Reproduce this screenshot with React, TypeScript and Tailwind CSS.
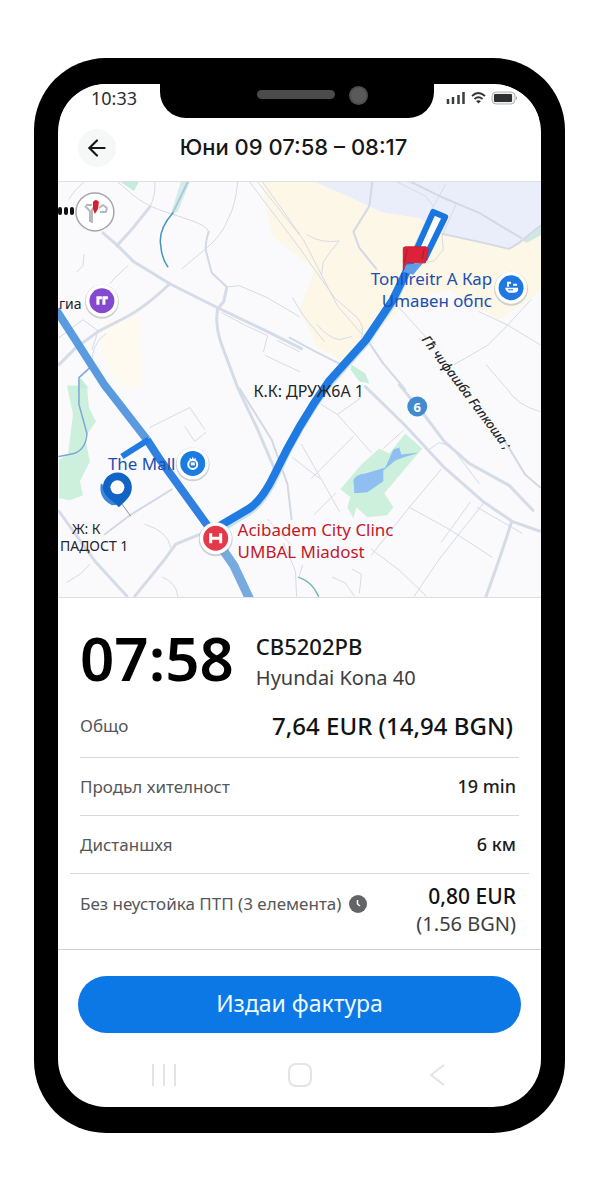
import { ArrowLeft } from 'lucide-react'
import type { ReactNode } from 'react'

const minorRoads = [
  'M155 182 Q156 196 150 207',
  'M118 182 L133 195 Q144 204 160 210 L190 220 Q208 226 209 232',
  'M238 182 Q236 205 229 218 Q222 236 206 249 L182 269',
  'M128 266 L115 278 L110 284',
  'M59 338 L83 320 L98 331',
  'M227 287 L240 286 L268 298 L300 317',
  'M222 313 Q245 326 268 336 L264 352',
  'M278 341 L300 352 M266 356 L300 372',
  'M250 182 L300 248 L335 298 L358 318 Q366 328 362 338',
  'M258 182 L304 240 L338 306 L362 334',
  'M263 182 L300 234',
  'M293 298 L304 316 L325 342 M318 325 Q328 338 340 340 L352 337',
  'M308 235 Q322 244 340 241 Q330 252 324 262 L322 275',
  'M457 204 L443 236 L444 250 L435 261 L424 263',
  'M446 185 L430 214 L415 246',
  'M398 182 L426 196 L434 206',
  'M400 308 L427 338',
  'M532 300 L508 326 L488 346 L455 365',
  'M480 312 L508 325 L541 345',
  'M487 365 L506 387 M507 388 Q518 406 541 412',
  'M338 415 L372 453 M354 437 L312 479 M322 405 L338 415 L362 398',
  'M302 445 L340 512 M293 458 L320 479 M315 515 L336 494',
  'M384 449 L404 431 M430 450 L440 443 L452 447 L480 484',
  'M442 470 L410 508 L372 556 M410 508 L450 530 L493 558',
  'M485 503 L440 560 L415 597 M372 550 L400 571 L427 597',
  'M478 508 L523 534 M471 503 L455 525 L442 543',
  'M333 578 L346 584 L355 597 M353 570 L362 575 L360 594 M303 566 L300 576',
  'M150 428 L190 408 L205 430 M185 427 L195 442 L206 433',
  'M90 565 L80 575 L67 583 M163 578 Q177 584 178 597',
  'M145 525 Q168 532 171 548',
  'M98 332 L92 350 M106 334 Q90 345 92 368',
  'M84 182 Q74 190 69 199 M84 255 L83 266 L77 272',
  'M284 544 L296 572 L297 597 M268 520 L290 544',
]

const mediumRoads = [
  'M209 232 Q206 240 206 250 L212 273 L227 287',
  'M373 182 L370 206 L354 232 L360 248 L377 269',
  'M412 182 L440 196 L480 213 L522 238',
  'M443 234 L480 242 L510 249 L520 243 L541 226',
  'M105 535 L130 516 L172 490',
  'M290 338 L316 352 L340 364',
  'M240 389 L272 440 L288 485 L292 520',
  'M365 336 L384 364 L406 390',
  'M506 442 L526 475 L541 488',
]

const majorRoads = [
  'M103 233 L118 246 L134 262 L170 284 L220 309 L270 333 L302 349',
  'M150 207 L134 227 L117 246',
  'M227 288 L224 302 L218 309 Q215 326 222 345 L238 388 L258 430 L276 472',
  'M170 284 Q145 308 125 318 L98 332 L76 348 L59 365',
  'M366 387 L405 425 L445 468 L485 503 L513 522 L541 532',
  'M400 385 L427 418 L445 442 L470 464 L510 486 L534 511',
  'M512 524 Q504 550 487 597',
  'M59 512 L95 562 L127 597',
  'M135 597 L165 560 L176 545 L205 533',
]

interface RowProps {
  label: ReactNode
  children: ReactNode
}

function Row({ label, children }: RowProps) {
  return (
    <div className="flex h-[58px] items-center justify-between border-t border-[#d6d8da]">
      <dt className="text-[17px] text-[#555759]">{label}</dt>
      <dd className="pr-[3px] text-[18px] font-medium text-[#1b1c1d]">{children}</dd>
    </div>
  )
}

function Marker({ x, y, color, children }: { x: number; y: number; color: string; children?: ReactNode }) {
  return (
    <g transform={`translate(${x} ${y})`}>
      <circle cy="1" r="17" fill="#8d949c" opacity="0.4" />
      <circle r="16" fill="#fff" />
      <circle r="12.5" fill={color} />
      {children}
    </g>
  )
}

function RouteMap() {
  return (
    <svg
      className="block h-auto w-full border-y border-[#dcdee2] bg-[#fafafc]"
      viewBox="58 182 484 416"
      role="img"
      aria-label="Маршрут"
    >
      {/* Land areas */}
      <path d="M262 182 H542 V292 L500 320 L450 290 L412 300 L345 362 L318 348 L300 310 L315 270 L272 235Z" fill="#fdf7e8" />
      <path d="M316 182 H542 V230 L510 248 L446 234 L420 218 L382 212 L348 196Z" fill="#e9eefa" />
      <path d="M106 322 L140 316 L142 388 L120 388 L100 350Z" fill="#fefaf0" />
      <path d="M522 240 L542 226 V235 L528 243Z" fill="#cfe9e2" />
      <path d="M121 182 H139 L134 191Z" fill="#c3ecdc" />
      <path d="M181 182 H190 L178 212 L171 214Z" fill="#d5eceb" />
      <path d="M67 386 H87 L89 408 L96 422 L85 438 L90 462 L80 482 L83 496 L70 501 L59 499 V460 L68 455 L73 415Z" fill="#cdf0dd" />
      <path d="M80 378 L89 389 H77Z" fill="#c3ecdc" />
      <path d="M352 365 L366 374 L370 384 L360 382 L351 370Z" fill="#c9eddb" />
      <path d="M406 434 L423 449 L385 494 L394 508 L388 516 L368 518 L357 508 L354 519 L348 508 L351 498 L341 490 L362 465 L380 449 L390 454Z" fill="#cdf0dd" />
      <path
        d="M354 481 Q356 475 366 474 L386 468 L394 450 L400 448 L402 455 L420 453 L404 458 L396 461 L384 471 L384 482 L368 493 L355 494Z"
        fill="#8ebff0"
      />

      {/* Streets */}
      <g fill="none" strokeLinecap="round" strokeLinejoin="round">
        <g stroke="#d6dae2" strokeWidth="1">
          {minorRoads.map((d) => (
            <path key={d} d={d} />
          ))}
        </g>
        <g stroke="#d3d9e4" strokeWidth="2">
          {mediumRoads.map((d) => (
            <path key={d} d={d} />
          ))}
        </g>
        <g stroke="#d5dce7" strokeWidth="3">
          {majorRoads.map((d) => (
            <path key={d} d={d} />
          ))}
        </g>
        <path d="M188 182 L173 213" stroke="#a9cbd9" strokeWidth="2" />
        <path d="M173 213 Q158 230 161 246 Q162 259 168 267" stroke="#4595c4" strokeWidth="1.5" />
        <path d="M90 368 L79 378 L79 405 L87 434 Q86 450 74 454 L59 457" stroke="#7da7da" strokeWidth="1.5" />
        <path d="M299 578 Q313 583 319 597" stroke="#72b5bb" strokeWidth="1.5" />
      </g>

      {/* Route */}
      <g fill="none" strokeLinejoin="round">
        <path d="M56 310 L105 386 L147 440" stroke="#5a9be0" strokeWidth="8" />
        <path d="M216 540 L234 566 L251 602" stroke="#77abe0" strokeWidth="9" />
        <path d="M147 440 L160 460 L212 532" stroke="#2f80e0" strokeWidth="8" />
        <path d="M122 457 L149 440" stroke="#1f7ae2" strokeWidth="6" />
        <path d="M216 532 L250 511 Q264 501 276 475 Q298 426 330 383 L366 342 L393 303 L410 267" stroke="#c8dff6" strokeWidth="9" />
        <path d="M216 529 L250 509 Q263 500 275 475 Q298 426 330 381 L366 341 L393 301 L412 262" stroke="#1f7ae2" strokeWidth="8" />
        <path d="M417 250 L434 212 L446 217 L425 260" fill="#fff" stroke="#1976df" strokeWidth="6" />
      </g>

      {/* Destination flag */}
      <path d="M406 265 L424 263 L414 275 L404 272Z" fill="#5d9eea" />
      <path d="M404 271 V249 Q404 247 406 247 H427 Q429 248 429 251 L426 263 H407Z" fill="#dc2238" stroke="#c81e31" strokeLinejoin="round" />
      <path d="M408 249 L405 263 M425 249 L423 259" stroke="#a91a2c" fill="none" />

      {/* Start pin */}
      <path d="M101 484 Q98 499 112 506 Q120 506 122 501Z" fill="#3b85dc" />
      <path d="M120 502 L131 517" stroke="#8094a5" />
      <path d="M118 473 C109 473 103 480 103 488 C103 497 113 501 119 508 C126 501 132 497 132 488 C132 480 126 473 118 473Z" fill="#1163c6" />
      <circle cx="117.500" cy="488" r="7" fill="#fff" />

      {/* Place markers */}
      <Marker x={102} y={301} color="#8549cf">
        <path d="M-4 4 V-3 H0 M2 4 V-3 H6" fill="none" stroke="#fff" strokeWidth="3" />
      </Marker>
      <Marker x={193} y={464} color="#1a7be0">
        <circle cy="1" r="4.500" fill="none" stroke="#fff" strokeWidth="2" />
        <path d="M-3 -5 L-1 -3 M3 -5 L1 -3 M0 -6 V-3" stroke="#fff" strokeWidth="1.500" />
        <rect x="-2" y="-1" width="4" height="3" fill="#fff" />
      </Marker>
      <Marker x={512} y={288} color="#1f77e0">
        <path d="M-6 0 H7 V3 Q6 5 3 5 H-2 Q-5 4 -6 0Z M-4 -6 H0 V-4 H-2 V-1 H-4Z M2 -4 H6 V-2 H2Z" fill="#fff" />
        <path d="M-3 2 H2" stroke="#1f77e0" />
      </Marker>
      <Marker x={216} y={539} color="#e23a4b">
        <path d="M-5 -5 V5 M5 -5 V5 M-5 0 H5" fill="none" stroke="#fff" strokeWidth="3" />
      </Marker>
      <circle cx="418" cy="407" r="10" fill="#438bcf" />
      <text x="418" y="412" textAnchor="middle" fontSize="13" fontWeight="700" fill="#fff">6</text>

      {/* Map settings badge */}
      <path d="M60 209 V213 M66 209 V213 M72 209 V213" stroke="#111" strokeWidth="4" strokeLinecap="round" />
      <circle cx="95" cy="212" r="19" fill="#fff" stroke="#a5a7aa" strokeWidth="1.500" />
      <path d="M85 206 L90 211 V222 M92 223 V210 L94 207 M86 205 H92 M99 208 L103 205 L107 208 L106 212 H100" fill="none" stroke="#b4b8bc" strokeWidth="2" strokeLinejoin="round" />
      <path d="M93 202 Q96 198 99 202 L98 209 L95 214 L93 209Z" fill="#d6202c" />

      {/* Labels */}
      <g fill="#1f4fae" fontSize="17">
        <text x="493" y="285" textAnchor="end">Tonllreitr А Кар</text>
        <text x="493" y="307" textAnchor="end">Umавен обпс</text>
        <text x="108" y="471">The Mall</text>
      </g>
      <g fill="#c2182b" fontSize="17">
        <text x="238" y="537">Acibadem City Clinc</text>
        <text x="238" y="559">UMBAL Miadost</text>
      </g>
      <g fill="#242628" fontSize="14">
        <text x="59" y="309">гиа</text>
        <text x="254" y="397" fontSize="16">К.К: ДРУЖ6А 1</text>
        <text x="72" y="535">Ж: К</text>
        <text x="60" y="552">ПАДОСТ 1</text>
        <text transform="translate(422 340) rotate(53)" fontSize="13" fontWeight="500" fontStyle="italic">
          Гћ чифашба Fапкоша ;
        </text>
      </g>
    </svg>
  )
}

function StatusIcons() {
  return (
    <svg className="h-4 w-[72px]" viewBox="0 0 72 16" aria-hidden="true">
      <path d="M3 14 V9 M8 14 V7 M13.500 14 V5 M18.500 14 V2" stroke="#3b3c3d" strokeWidth="2.500" />
      <g fill="none" stroke="#343536" strokeWidth="1.800">
        <path d="M27 6 Q33 0 40 6" />
        <path d="M29.500 9 Q33.500 5.500 37.500 9" />
      </g>
      <path d="M31 11 Q33.500 9.500 36 11 L33.500 13.500Z" fill="#343536" />
      <rect x="47" y="2" width="23" height="12" rx="4" fill="#eee" stroke="#b5b5b5" />
      <rect x="49" y="4" width="18" height="8" rx="1" fill="#2e2f30" />
      <path d="M71 6 Q73 8 71 10Z" fill="#999" />
    </svg>
  )
}

function StatusBar() {
  return (
    <div className="flex h-[34px] bg-white">
      <div className="w-[102px] pl-[33px] pt-[2px] text-[18px] leading-6 text-[#2c2d2e]">10:33</div>
      <div className="flex flex-1 items-start justify-end gap-[14px] rounded-b-[26px] bg-black pr-[66px] pt-[2px]">
        <div className="mt-[4px] h-[9px] w-[78px] rounded-full bg-[#4b4b4b]" />
        <div className="h-[19px] w-[19px] rounded-full border-2 border-[#4e4e4e] bg-[#5a5a5a]" />
      </div>
      <div className="flex w-[107px] items-start pl-[11px] pt-[6px]">
        <StatusIcons />
      </div>
    </div>
  )
}

export default function App() {
  return (
    <main className="min-h-screen bg-white pt-[58px] pr-[35px] pb-[67px] pl-[34px] font-['Noto_Sans',sans-serif]">
      <div className="rounded-[72px] bg-black px-6 py-[26px]">
        <div className="overflow-hidden rounded-[48px] bg-white">
          <StatusBar />

          {/* Header */}
          <header className="flex h-[63px] items-center pr-[70px] pb-1 pl-5">
            <button
              type="button"
              aria-label="Назад"
              className="flex h-[38px] w-[38px] items-center justify-center rounded-full bg-[#f6f8f8] text-[#161718]"
            >
              <ArrowLeft size={26} strokeWidth={2} />
            </button>
            <h1 className="flex-1 text-center font-['Inter','Noto_Sans',sans-serif] text-[22px] font-medium text-[#161718]">
              Юни 09 07:58 – 08:17
            </h1>
          </header>

          <RouteMap />

          {/* Trip summary */}
          <section className="border-b border-[#cfd1d3] px-[22px]">
            <div className="flex items-center gap-[22px] pt-8">
              <div className="pb-2 text-[60px] leading-[56px] font-semibold text-black">07:58</div>
              <div>
                <div className="text-[22px] leading-8 font-medium text-[#161718]">CB5202PB</div>
                <div className="text-[20px] leading-8 text-[#3c3e40]">Hyundai Kona 40</div>
              </div>
            </div>

            <dl>
              <div className="flex h-[63px] items-center justify-between">
                <dt className="text-[17px] text-[#555759]">Общо</dt>
                <dd className="pr-[6px] text-[24px] font-medium text-[#111213]">7,64 EUR (14,94 BGN)</dd>
              </div>
              <Row label="Продьл хителност">19 min</Row>
              <Row label="Дистаншхя">6 км</Row>
              <div className="-mx-[10px] flex h-[76px] items-start justify-between border-t border-[#d6d8da] px-[10px] pt-2">
                <dt className="flex items-center gap-[8px] pt-[10px] text-[17px] leading-6 text-[#555759]">
                  Без неустойка ПТП (3 елемента)
                  <svg className="h-[18px] w-[18px]" viewBox="0 0 18 18" aria-hidden="true">
                    <circle cx="9" cy="9" r="9" fill="#636466" />
                    <path d="M8.500 5 V9 L11 11" fill="none" stroke="#fff" strokeWidth="1.500" />
                  </svg>
                </dt>
                <dd className="pr-[3px] text-right text-[20px] leading-7 text-[#3c3e40]">
                  <div className="text-[21px] font-medium text-[#111213]">0,80 EUR</div>
                  (1.56 BGN)
                </dd>
              </div>
            </dl>
          </section>

          {/* Invoice action */}
          <div className="px-5 pt-[26px]">
            <button type="button" className="h-[57px] w-full rounded-full bg-[#0b78e6] pb-[2px] text-[23px] text-[#eefaff]">
              Издаи фактура
            </button>
          </div>

          {/* System navigation */}
          <nav className="flex h-[74px] items-start justify-between px-[94px] pt-[30px] text-[#e4e4e5]">
            <button type="button" aria-label="Последни приложения" className="flex h-6 w-6 items-center justify-between">
              <span className="h-[22px] w-[2px] bg-current" />
              <span className="h-[22px] w-[2px] bg-current" />
              <span className="h-[22px] w-[2px] bg-current" />
            </button>
            <button type="button" aria-label="Начало" className="h-6 w-6 rounded-lg border-2 border-current" />
            <button type="button" aria-label="Назад към предишния екран">
              <svg className="h-6 w-6" viewBox="0 0 24 24" fill="none" stroke="currentColor" strokeWidth="2">
                <path d="M21 2 L8 12 L21 22" />
              </svg>
            </button>
          </nav>
        </div>
      </div>
    </main>
  )
}
